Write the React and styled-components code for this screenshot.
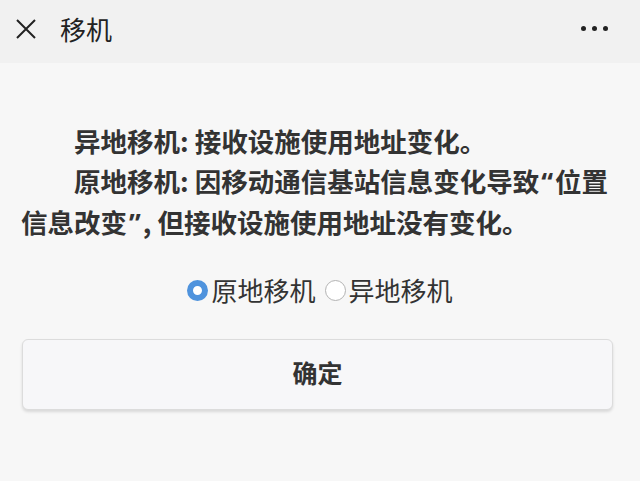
import React, { useState } from 'react';
import styled, { createGlobalStyle } from 'styled-components';

const GlobalStyle = createGlobalStyle`
  body {
    margin: 0;
    background: #f7f7f7;
    font-family: "Noto Sans CJK SC", "Noto Sans", sans-serif;
  }
`;

const Page = styled.div`
  width: 640px;
  min-height: 481px;
  background: #f7f7f7;
`;

const Header = styled.div`
  height: 63px;
  box-sizing: border-box;
  padding: 0 32px 6px 15px;
  display: flex;
  align-items: center;
  background: #f1f1f1;
`;

const Title = styled.div`
  margin-left: 23px;
  font-size: 26px;
  line-height: 30px;
  color: #222;
`;

const More = styled.div`
  margin-left: auto;
  display: flex;
  gap: 6px;
`;

const Dot = styled.span`
  width: 5px;
  height: 5px;
  border-radius: 50%;
  background: #222;
`;

const Notice = styled.div`
  margin-top: 58px;
  padding: 0 20px 0 21px;
`;

const Para = styled.p`
  margin: 0;
  text-indent: 2em;
  font-size: 26.5px;
  line-height: 40px;
  font-weight: bold;
  color: #333;
`;

const Quote = styled.span`
  font-family: "Noto Sans", sans-serif;
  margin: 0 2px;
`;

const RadioRow = styled.div`
  margin-top: 27px;
  height: 40px;
  display: flex;
  justify-content: center;
  align-items: center;
  gap: 9px;
`;

const Option = styled.label`
  display: flex;
  align-items: center;
  gap: 3px;
  font-size: 26px;
  line-height: 40px;
  color: #333;
  cursor: pointer;
`;

const Circle = styled.span`
  flex: 0 0 21px;
  width: 21px;
  height: 21px;
  box-sizing: border-box;
  border-radius: 50%;
  background: #fff;
  border: ${p => (p.$checked ? '6px solid #4f93dd' : '1.5px solid #b3b3b3')};
`;

const ButtonWrap = styled.div`
  margin-top: 29px;
  padding: 0 27px 0 22px;
`;

const Confirm = styled.button`
  width: 100%;
  height: 71px;
  padding: 0 0 5px;
  border: 1px solid #dcdcdc;
  border-radius: 6px;
  background: #f7f7f9;
  box-shadow: 0 2px 3px rgba(0, 0, 0, 0.12);
  font-family: "Noto Sans CJK SC", sans-serif;
  font-size: 25px;
  font-weight: bold;
  color: #333;
  cursor: pointer;
`;

const CloseIcon = () => (
  <svg width="22" height="22" viewBox="0 0 22 22">
    <path d="M2 2 L20 20 M20 2 L2 20" stroke="#222" strokeWidth="2" fill="none" />
  </svg>
);

const App = () => {
  const [mode, setMode] = useState('local');

  return (
    <Page>
      <GlobalStyle />
      <Header>
        <CloseIcon />
        <Title>移机</Title>
        <More>
          <Dot />
          <Dot />
          <Dot />
        </More>
      </Header>
      <Notice>
        <Para>异地移机: 接收设施使用地址变化。</Para>
        <Para>
          原地移机: 因移动通信基站信息变化导致<Quote>“</Quote>位置信息改变<Quote>”</Quote>, 但接收设施使用地址没有变化。
        </Para>
      </Notice>
      <RadioRow>
        <Option onClick={() => setMode('local')}>
          <Circle $checked={mode === 'local'} />
          原地移机
        </Option>
        <Option onClick={() => setMode('remote')}>
          <Circle $checked={mode === 'remote'} />
          异地移机
        </Option>
      </RadioRow>
      <ButtonWrap>
        <Confirm>确定</Confirm>
      </ButtonWrap>
    </Page>
  );
};

export default App;
